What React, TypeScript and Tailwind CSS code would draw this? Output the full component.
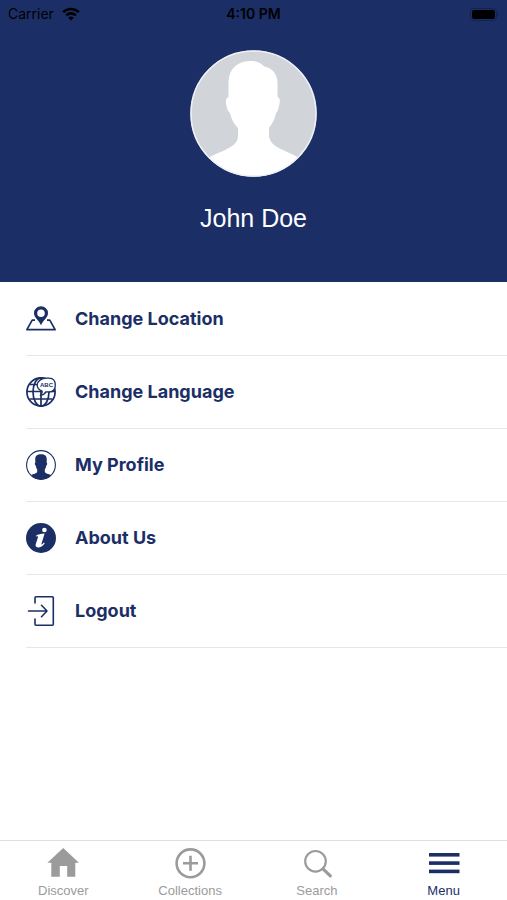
import type { ComponentType } from "react";
import clsx from "clsx";

interface MenuItem {
  label: string;
  icon: ComponentType;
}

interface TabItem {
  label: string;
  icon: ComponentType;
  active?: boolean;
}

function WifiIcon() {
  return (
    <svg viewBox="0 0 18 14" className="h-3.5 w-[18px]" fill="none" stroke="currentColor" strokeWidth="2.6" aria-hidden>
      <path d="M1.2 5.2a11 11 0 0 1 15.6 0" />
      <path d="M4.2 8.4a6.8 6.8 0 0 1 9.6 0" />
      <path d="M9 13.6 6.2 10.8a4 4 0 0 1 5.6 0Z" fill="currentColor" stroke="none" />
    </svg>
  );
}

function BatteryIcon() {
  return (
    <svg viewBox="0 0 29 13" className="h-[13px] w-[29px]" aria-hidden>
      <rect x="0.5" y="0.5" width="26" height="12" rx="3.5" fill="none" stroke="#000" strokeOpacity="0.25" />
      <rect x="2" y="2" width="23" height="9" rx="2" fill="#000" />
      <path d="M27.500 4.500c1.600.6 1.600 3.400 0 4Z" fill="#000" fillOpacity="0.3" />
    </svg>
  );
}

function Avatar() {
  return (
    <svg viewBox="0 0 127 127" className="size-[127px]" role="img" aria-label="John Doe">
      <defs>
        <clipPath id="avatar-clip">
          <circle cx="63.5" cy="63.5" r="63" />
        </clipPath>
      </defs>
      <g clipPath="url(#avatar-clip)">
        <rect width="127" height="127" fill="#d1d5da" />
        <path
          d="M61 11C68 11 71 13 74 16.500C83 18 87.500 25 87.500 33V47C90.500 48 90 52 89 56C88 60 87.500 62 86 63C85 69 82 74 79 78V86C80 93 84 96 95 101C101 103.500 106 106 110 109V127H16V109C21 106 26 104 33 101C43 96 48 93 48 86V78C44 74 41 69 40 63C38.500 62 37.500 60 36.500 56C35.500 52 35.500 48 38.500 47V32C39 18 48 11 61 11Z"
          fill="#fff"
        />
      </g>
      <circle cx="63.5" cy="63.5" r="62.5" fill="none" stroke="#eef0f5" strokeWidth="1.6" />
    </svg>
  );
}

function LocationIcon() {
  return (
    <svg viewBox="0 0 30 30" className="size-[30px]" fill="none" stroke="currentColor" strokeWidth="1.7" aria-hidden>
      <path d="M9 16.200H6.200L0.900 25.700H29.100L23.800 16.200H21" strokeLinejoin="round" />
      <path
        d="M15 2.200a7 7 0 0 0-7 7c0 4.200 4.800 7 7 12 2.200-5 7-7.800 7-12A7 7 0 0 0 15 2.200Zm0 3.200a3.800 3.800 0 1 1 0 7.600 3.800 3.800 0 0 1 0-7.600Z"
        fill="currentColor"
        fillRule="evenodd"
        stroke="none"
      />
    </svg>
  );
}

function LanguageIcon() {
  return (
    <svg viewBox="0 0 30 30" className="size-[30px]" fill="none" stroke="currentColor" strokeWidth="1.7" aria-hidden>
      <circle cx="15" cy="15" r="14.1" />
      <ellipse cx="15" cy="15" rx="8" ry="14.1" />
      <path d="M15 1v28M1 14.500h28M3.500 7.500h23M3.500 22h23" />
      <path
        d="M20.500 1.200h2.500c4.500 0 6.300 2.800 6.300 7s-2.500 6.700-7 6.700h-2.500c-1 2-2.500 3-4.900 3.200 1.200-1.300 1.500-2.600 1.200-4C13 12.800 11.200 10.700 11.200 8.200c0-4.200 4.300-7 9.300-7Z"
        fill="#fff"
        strokeWidth="1.3"
      />
      <text
        x="20.500"
        y="10"
        textAnchor="middle"
        fill="currentColor"
        stroke="none"
        className="font-['Liberation_Sans'] text-[6px] font-bold"
      >
        ABC
      </text>
    </svg>
  );
}

function ProfileIcon() {
  return (
    <svg viewBox="0 0 30 30" className="size-[30px]" aria-hidden>
      <circle cx="15" cy="15" r="14.4" fill="none" stroke="currentColor" strokeWidth="1.1" />
      <path
        d="M15 4.300c3.800 0 5.900 1.700 5.800 5.500l-.2 2.700c.9.200.7 2.900-.4 3.200-.3 1.700-.8 2.800-1.400 3.700v2.600c.6 1.500 3.900 1.900 6.300 3.200C22.700 28 18.800 29.400 15 29.400S7.300 28 4.900 25.200c2.400-1.300 5.700-1.700 6.300-3.200v-2.600c-.6-.9-1.100-2-1.400-3.700-1.100-.3-1.300-3-.4-3.200l-.2-2.700C9.100 6 11.200 4.300 15 4.300Z"
        fill="currentColor"
      />
    </svg>
  );
}

function AboutIcon() {
  return (
    <svg viewBox="0 0 30 30" className="size-[30px]" aria-hidden>
      <circle cx="15" cy="15" r="15" fill="currentColor" />
      <circle cx="18.400" cy="7" r="2.300" fill="#fff" />
      <path
        d="M10 12.700c2-1.500 4.800-2.200 8.600-2.300L15.500 20.800c-.3 1.200.5 1 2.500-1.200l.7.600c-2 3-4.600 4.300-6.800 4.200-2.100-.1-2.700-1.500-2.100-3.300l2.100-6.700c.3-1.100-.4-1.300-1.900-.8Z"
        fill="#fff"
      />
    </svg>
  );
}

function LogoutIcon() {
  return (
    <svg viewBox="0 0 30 30" className="size-[30px]" fill="none" stroke="currentColor" strokeWidth="1.6" strokeLinecap="round" strokeLinejoin="round" aria-hidden>
      <path d="M9 7V1.800a1 1 0 0 1 1-1H26.300a1 1 0 0 1 1 1V28.200a1 1 0 0 1-1 1H10a1 1 0 0 1-1-1V23" />
      <path d="M2.500 15H21M15.500 9.300 21 15l-5.500 5.700" />
    </svg>
  );
}

function HomeIcon() {
  return (
    <svg viewBox="0 0 32 32" className="size-8" fill="currentColor" aria-hidden>
      <path d="M16.200 1 32 15.800H28.300V29.800H20.200V19H12.800V29.800H4.300V15.800H0.400Z" />
    </svg>
  );
}

function CollectionsIcon() {
  return (
    <svg viewBox="0 0 32 32" className="size-8" fill="none" stroke="currentColor" aria-hidden>
      <circle cx="16.500" cy="16.300" r="13.900" strokeWidth="2.600" />
      <path d="M16.500 8.800v15M9 16.300h15" strokeWidth="2.600" />
    </svg>
  );
}

function SearchIcon() {
  return (
    <svg viewBox="0 0 32 32" className="size-8" fill="none" stroke="currentColor" aria-hidden>
      <circle cx="14.500" cy="14.300" r="10.300" strokeWidth="2.200" />
      <path d="m22 21.800 7.300 7" strokeWidth="3.200" strokeLinecap="round" />
    </svg>
  );
}

function MenuIcon() {
  return (
    <svg viewBox="0 0 32 32" className="size-8" fill="currentColor" aria-hidden>
      <rect x="1" y="6" width="30.500" height="3.600" />
      <rect x="1" y="14.300" width="30.500" height="3.600" />
      <rect x="1" y="22.600" width="30.500" height="3.600" />
    </svg>
  );
}

const menuItems: MenuItem[] = [
  { label: "Change Location", icon: LocationIcon },
  { label: "Change Language", icon: LanguageIcon },
  { label: "My Profile", icon: ProfileIcon },
  { label: "About Us", icon: AboutIcon },
  { label: "Logout", icon: LogoutIcon },
];

const tabs: TabItem[] = [
  { label: "Discover", icon: HomeIcon },
  { label: "Collections", icon: CollectionsIcon },
  { label: "Search", icon: SearchIcon },
  { label: "Menu", icon: MenuIcon, active: true },
];

function StatusBar() {
  return (
    <div className="grid w-full grid-cols-3 items-center px-2 pt-1 text-sm text-black">
      <div className="flex items-center gap-2">
        <span>Carrier</span>
        <WifiIcon />
      </div>
      <span className="text-center font-semibold">4:10 PM</span>
      <div className="flex justify-end">
        <BatteryIcon />
      </div>
    </div>
  );
}

export default function App() {
  return (
    <div className="flex min-h-screen flex-col bg-white font-['Inter',sans-serif] text-[#1b2f66]">
      <header className="flex flex-col items-center bg-[#1b2f66] pb-12">
        <StatusBar />
        <div className="pt-[26px]">
          <Avatar />
        </div>
        <h1 className="pt-[25px] font-['Liberation_Sans',sans-serif] text-[25px] leading-8 text-white">
          John Doe
        </h1>
      </header>

      <main className="flex-1 pt-px">
        <ul className="pl-[26px]">
          {menuItems.map(({ label, icon: Icon }) => (
            <li key={label} className="border-b border-[#e6e6e8]">
              <button type="button" className="flex h-[72px] w-full items-center gap-[19px] text-left text-lg font-bold">
                <Icon />
                {label}
              </button>
            </li>
          ))}
        </ul>
      </main>

      <nav className="grid grid-cols-4 border-t border-[#dedede] pt-1.5 pb-px font-['Liberation_Sans',sans-serif]">
        {tabs.map(({ label, icon: Icon, active }) => (
          <a
            key={label}
            href="#"
            aria-current={active ? "page" : undefined}
            className={clsx(
              "flex flex-col items-center gap-1 text-[13px] leading-4",
              active ? "text-[#1b2f66]" : "text-[#9b9b9b]"
            )}
          >
            <Icon />
            {label}
          </a>
        ))}
      </nav>
    </div>
  );
}
